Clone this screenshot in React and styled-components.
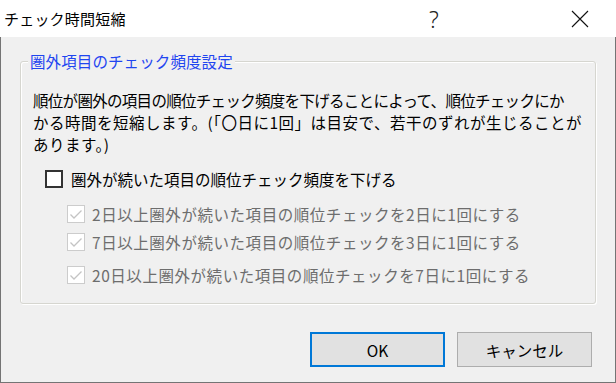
import React from "react";
import styled, { createGlobalStyle } from "styled-components";

const Global = createGlobalStyle`
  html, body { margin: 0; padding: 0; }
  body {
    width: 616px;
    height: 383px;
    overflow: hidden;
    background: #f0f0f0;
    font-family: "Noto Sans CJK JP", "Noto Sans", sans-serif;
  }
`;

const Window = styled.div`
  width: 616px;
  height: 383px;
  display: flex;
  flex-direction: column;
  box-sizing: border-box;
`;

const TitleBar = styled.div`
  height: 37px;
  flex: none;
  background: #ffffff;
  display: flex;
  align-items: center;
  padding-left: 4px;
  color: #000;
  font-size: 15px;
`;

const Title = styled.div`
  flex: 1;
  letter-spacing: 0.2px;
`;

const TitleButton = styled.div`
  width: ${(p) => p.$w}px;
  margin-right: ${(p) => p.$mr || 0}px;
  height: 37px;
  display: flex;
  align-items: center;
  justify-content: center;
  font-family: "Noto Sans", sans-serif;
  font-size: 23px;
  font-weight: 300;
  color: #222;
`;

const Body = styled.div`
  flex: 1;
  display: flex;
  flex-direction: column;
  background: #f0f0f0;
  border: 1px solid #747474;
  border-top: none;
`;

const Group = styled.div`
  position: relative;
  margin: 24px 19px 0 19px;
  height: 243px;
  box-sizing: border-box;
  border: 1px solid #d6d6d0;
  border-radius: 3px;
  box-shadow: 1px 1px 0 #ffffff, inset 1px 1px 0 #ffffff;
  padding: 27px 12px 0 12px;
`;

const Legend = styled.div`
  position: absolute;
  top: -11px;
  left: 7px;
  padding: 0 2px;
  background: #f0f0f0;
  color: #1f45f0;
  font-size: 15.5px;
  line-height: 20px;
  letter-spacing: 0.1px;
`;

const Para = styled.p`
  margin: 0;
  font-size: 15.5px;
  line-height: 22px;
  color: #000;
`;

const Line = styled.span`
  display: block;
  white-space: nowrap;
  letter-spacing: ${(p) => p.$ls}px;
`;

const Row = styled.div`
  display: flex;
  align-items: center;
  height: 22px;
  margin-top: ${(p) => p.$mt}px;
  padding-left: ${(p) => p.$indent}px;
  font-size: 15.5px;
  white-space: nowrap;
  letter-spacing: ${(p) => (p.$disabled ? 0.55 : 0)}px;
  color: ${(p) => (p.$disabled ? "#6d6d6d" : "#000")};
`;

const Box = styled.span`
  width: 18px;
  height: 18px;
  box-sizing: border-box;
  border: ${(p) => (p.$disabled ? "1.5px solid #cccccc" : "2px solid #333333")};
  background: #ffffff;
  display: flex;
  align-items: center;
  justify-content: center;
  margin-right: ${(p) => p.$gap}px;
  flex: none;
`;

const Footer = styled.div`
  margin-top: auto;
  display: flex;
  justify-content: flex-end;
  gap: 12px;
  padding: 0 23px 15px 0;
`;

const Button = styled.button`
  width: 135px;
  height: 35px;
  box-sizing: border-box;
  background: #e1e1e1;
  border: ${(p) => (p.$default ? "2px solid #0078d7" : "1px solid #adadad")};
  font-family: "Noto Sans CJK JP", "Noto Sans", sans-serif;
  font-size: 15.5px;
  color: #000;
  padding: 0;
`;

const Check = () => (
  <svg width="14" height="14" viewBox="0 0 14 14">
    <path d="M1.5 7.5 L5 11 L12.5 3.5" fill="none" stroke="#c4c4c4" strokeWidth="1.3" />
  </svg>
);

export default function App() {
  return (
    <>
      <Global />
      <Window>
        <TitleBar>
          <Title>チェック時間短縮</Title>
          <TitleButton $w={72} $mr={74}>?</TitleButton>
          <TitleButton $w={72}>
            <svg width="18" height="18" viewBox="0 0 18 18">
              <path d="M1 1 L17 17 M17 1 L1 17" stroke="#111" strokeWidth="1.1" />
            </svg>
          </TitleButton>
        </TitleBar>
        <Body>
          <Group>
            <Legend>圏外項目のチェック頻度設定</Legend>
            <Para>
              <Line $ls={-0.7}>順位が圏外の項目の順位チェック頻度を下げることによって、順位チェックにか</Line>
              <Line $ls={0.5}>かる時間を短縮します。(「〇日に1回」は目安で、若干のずれが生じることが</Line>
              <Line $ls={0.5}>あります。)</Line>
            </Para>
            <Row $mt={13} $indent={12}>
              <Box $gap={8} />
              圏外が続いた項目の順位チェック頻度を下げる
            </Row>
            <Row $mt={13} $indent={34} $disabled>
              <Box $gap={7} $disabled>
                <Check />
              </Box>
              2日以上圏外が続いた項目の順位チェックを2日に1回にする
            </Row>
            <Row $mt={6} $indent={34} $disabled>
              <Box $gap={7} $disabled>
                <Check />
              </Box>
              7日以上圏外が続いた項目の順位チェックを3日に1回にする
            </Row>
            <Row $mt={11} $indent={34} $disabled>
              <Box $gap={7} $disabled>
                <Check />
              </Box>
              20日以上圏外が続いた項目の順位チェックを7日に1回にする
            </Row>
          </Group>
          <Footer>
            <Button $default>OK</Button>
            <Button>キャンセル</Button>
          </Footer>
        </Body>
      </Window>
    </>
  );
}
